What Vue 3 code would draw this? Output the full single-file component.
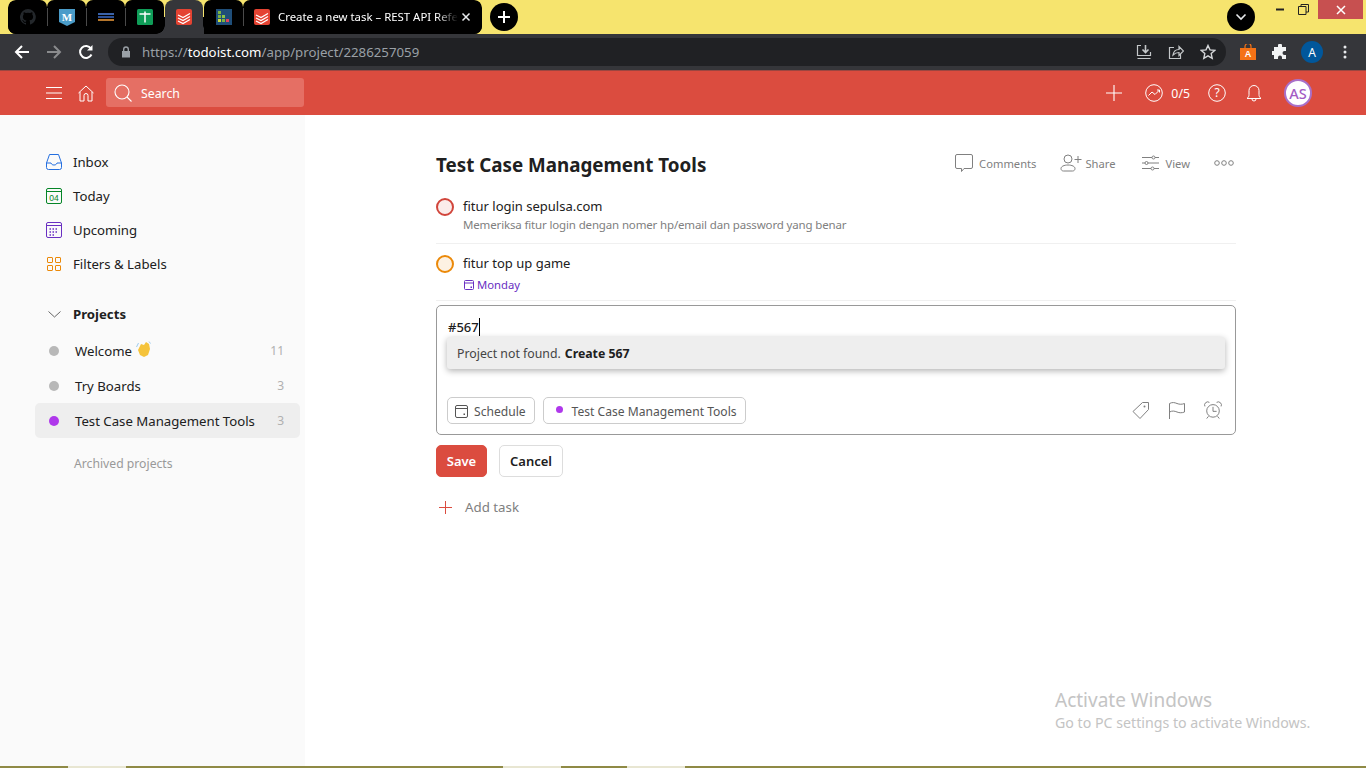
<script setup>
const navItems = [
  { name: 'Inbox', icon: 'inbox' },
  { name: 'Today', icon: 'today' },
  { name: 'Upcoming', icon: 'upcoming' },
  { name: 'Filters & Labels', icon: 'filters' },
]

const projects = [
  { name: 'Welcome', count: 11, color: '#b8b8b8', wave: true },
  { name: 'Try Boards', count: 3, color: '#b8b8b8' },
  { name: 'Test Case Management Tools', count: 3, color: '#af38eb', active: true },
]
</script>

<template>
  <div class="screen">
    <div class="tabstrip">
      <div class="tabs">
        <div class="tab">
          <svg width="16" height="16" viewBox="0 0 16 16"><path fill="#23272b" d="M8 0a8 8 0 0 0-2.5 15.6c.4.1.5-.2.5-.4v-1.4c-2.2.5-2.7-1-2.7-1-.4-.9-.9-1.200-.9-1.200-.7-.5.100-.5.100-.5.800.1 1.200.8 1.200.8.700 1.200 1.900.9 2.300.7.100-.5.300-.9.500-1.100-1.800-.2-3.600-.9-3.600-4 0-.9.300-1.600.8-2.100-.1-.2-.4-1 .1-2.100 0 0 .7-.2 2.200.8a7.600 7.600 0 0 1 4 0c1.500-1 2.200-.8 2.200-.8.500 1.100.2 1.900.1 2.100.5.600.8 1.300.8 2.100 0 3.100-1.900 3.700-3.700 3.900.3.300.6.800.6 1.500v2.200c0 .2.100.5.600.4A8 8 0 0 0 8 0z"/></svg>
        </div>
        <div class="tab sep">
          <svg width="16" height="17" viewBox="0 0 16 17"><path fill="#4a9cc9" d="M0 0h16v13l-8 4-8-4z"/><text x="8" y="11.500" class="fav-m">M</text></svg>
        </div>
        <div class="tab sep">
          <svg width="16" height="10" viewBox="0 0 16 10"><rect y="1" width="16" height="2" fill="#3a62a8"/><rect y="4" width="16" height="2" fill="#2c4f94"/><rect y="7" width="16" height="2" fill="#b5762c"/></svg>
        </div>
        <div class="tab sep">
          <svg width="16" height="16" viewBox="0 0 16 16"><rect width="16" height="16" rx="1.500" fill="#0f9d58"/><path fill="none" stroke="#fff" stroke-width="1.500" d="M2.500 5h11M8 2.500v11"/></svg>
        </div>
        <div class="tab active">
          <svg width="16" height="16" viewBox="0 0 16 16"><use href="#todoist-mark"/></svg>
        </div>
        <div class="tab">
          <svg width="16" height="16" viewBox="0 0 16 16"><rect width="16" height="16" fill="#1f4e79"/><rect x="2" y="2" width="3" height="3" fill="#7cb342"/><rect x="2" y="6" width="3" height="3" fill="#7cb342"/><rect x="6" y="6" width="3" height="3" fill="#8bc34a"/><rect x="2" y="10" width="3" height="3" fill="#cddc39"/><rect x="6" y="10" width="3" height="3" fill="#7cb342"/><rect x="10" y="10" width="3" height="3" fill="#e2445c"/></svg>
        </div>
        <div class="tab sep wide">
          <svg width="16" height="16" viewBox="0 0 16 16">
            <defs>
              <g id="todoist-mark">
                <rect width="16" height="16" rx="2" fill="#e44332"/>
                <path fill="none" stroke="#fff" stroke-width="1.300" d="M2 6l5 2.500 7-4M2 9l5 2.500 7-4M2 12l5 2.500 7-4"/>
              </g>
            </defs>
            <use href="#todoist-mark"/>
          </svg>
          <span class="tab-title">Create a new task – REST API Refe</span>
          <svg class="tab-x" width="10" height="10" viewBox="0 0 10 10"><path stroke="#e8eaed" stroke-width="1.500" d="M1.500 1.500l7 7M8.500 1.500l-7 7"/></svg>
        </div>
      </div>
      <div class="round-btn">
        <svg width="14" height="14" viewBox="0 0 14 14"><path stroke="#fff" stroke-width="2" d="M7 1v12M1 7h12"/></svg>
      </div>
      <div class="strip-right">
        <div class="round-btn">
          <svg width="12" height="8" viewBox="0 0 12 8"><path fill="none" stroke="#e8eaed" stroke-width="1.600" d="M1.500 1.500L6 6l4.500-4.500"/></svg>
        </div>
        <div class="win-btn">
          <svg width="10" height="3" viewBox="0 0 10 3"><rect width="8" height="2" y="0.500" fill="#222"/></svg>
        </div>
        <div class="win-btn">
          <svg width="11" height="11" viewBox="0 0 11 11"><path fill="none" stroke="#222" d="M.5 2.500h7.500v8H.5zM3 2.500V.5h7.500v7.500H8"/></svg>
        </div>
        <div class="win-btn close">
          <svg width="10" height="10" viewBox="0 0 10 10"><path stroke="#fff" stroke-width="1.500" d="M1 1l8 8M9 1L1 9"/></svg>
        </div>
      </div>
    </div>

    <div class="toolbar">
      <svg class="tool first" width="16" height="16" viewBox="0 0 16 16"><path fill="none" stroke="#fff" stroke-width="2" d="M15 8H2M8 2L2 8l6 6"/></svg>
      <svg class="tool" width="16" height="16" viewBox="0 0 16 16"><path fill="none" stroke="#8a8b8d" stroke-width="2" d="M1 8h13M8 2l6 6-6 6"/></svg>
      <svg class="tool" width="16" height="16" viewBox="0 0 16 16"><path fill="none" stroke="#fff" stroke-width="2" d="M13.500 10.500A6 6 0 1 1 13 4.500"/><path fill="#fff" d="M14.500 1v5.500H9z"/></svg>
      <div class="urlbar">
        <svg width="10" height="12" viewBox="0 0 10 12"><path fill="#9aa0a6" d="M1 5h8v6.500H1z"/><path fill="none" stroke="#9aa0a6" stroke-width="1.400" d="M2.700 5V3.300a2.300 2.300 0 0 1 4.600 0V5"/></svg>
        <span class="url">https://<b>todoist.com</b>/app/project/2286257059</span>
        <div class="url-icons">
          <svg width="16" height="16" viewBox="0 0 16 16"><path fill="none" stroke="#c4c7c9" stroke-width="1.200" d="M5 1.500H1.500v10h13V8M1.500 14.500h13"/><path fill="none" stroke="#c4c7c9" stroke-width="1.600" d="M9.500 1v7M6.500 5.500l3 3 3-3"/></svg>
          <svg width="16" height="16" viewBox="0 0 16 16"><path fill="none" stroke="#c4c7c9" stroke-width="1.200" d="M6 3.500H1.500v11h11V10M5 11c.5-3.500 3-5.500 6-5.500V2.500L15.500 7 11 11.500V8.500C8.500 8.500 6.500 9.500 5 11z"/></svg>
          <svg width="16" height="16" viewBox="0 0 16 16"><path fill="none" stroke="#d6d8da" stroke-width="1.400" d="M8 1.500l2 4.400 4.700.5-3.500 3.200 1 4.700L8 11.900l-4.200 2.400 1-4.700L1.300 6.400 6 5.900z"/></svg>
        </div>
      </div>
      <div class="ext-icons">
        <svg width="16" height="16" viewBox="0 0 16 16"><path fill="#f47216" d="M0 4h16v12H0z"/><path fill="none" stroke="#f47216" stroke-width="1.200" d="M5 4V2.500a3 3 0 0 1 6 0V4"/><text x="8" y="13" class="fav-a">A</text></svg>
        <svg class="puzzle" width="16" height="16" viewBox="0 0 16 16"><path fill="#f1f3f4" d="M6 1.500a2 2 0 0 1 4 0V3h4v4h-1.500a2 2 0 0 0 0 4H14v4h-4v-1.500a2 2 0 0 0-4 0V15H2v-4H.5a2 2 0 0 1 0-4H2V3h4z"/></svg>
        <div class="profile">A</div>
        <svg class="kebab" width="4" height="14" viewBox="0 0 4 14"><circle cx="2" cy="2" r="1.500" fill="#e8eaed"/><circle cx="2" cy="7" r="1.500" fill="#e8eaed"/><circle cx="2" cy="12" r="1.500" fill="#e8eaed"/></svg>
      </div>
    </div>

    <header class="topbar">
      <svg class="menu-ic" width="16" height="14" viewBox="0 0 16 14"><path stroke="#fff" d="M0 1.500h16M0 7h16M0 12.500h16"/></svg>
      <svg class="home-ic" width="16" height="17" viewBox="1 1 16 16"><path fill="none" stroke="#fff" d="M1.500 8.500L9 1.500l7.500 7M3 7.500v9h4v-5.500a2 2 0 0 1 4 0v5.500h4v-9"/></svg>
      <div class="search">
        <svg width="20" height="20" viewBox="0 0 20 20"><circle cx="9" cy="9" r="7" fill="none" stroke="#fff" stroke-width="1.100"/><path stroke="#fff" stroke-width="1.100" d="M14 14l4.500 4.500"/></svg>
        <span>Search</span>
      </div>
      <div class="top-right">
        <svg width="18" height="18" viewBox="0 0 18 18"><path stroke="#fff" stroke-width="1.100" d="M9 1v16M1 9h16"/></svg>
        <div class="karma">
          <svg width="18" height="18" viewBox="0 0 18 18"><circle cx="9" cy="9" r="8.300" fill="none" stroke="#fff"/><path fill="none" stroke="#fff" d="M3.500 11.500l3.500-3.500 3 2.500 4.500-4.500M12 6h2.500v2.500"/></svg>
          <span>0/5</span>
        </div>
        <svg width="18" height="18" viewBox="0 0 18 18"><circle cx="9" cy="9" r="8.300" fill="none" stroke="#fff"/><text x="9" y="13" class="help-q">?</text></svg>
        <svg class="bell" width="16" height="18" viewBox="0 0 16 18"><path fill="none" stroke="#fff" d="M1 14.500c1.500-1 2-2.500 2-4V6.500a5 5 0 0 1 10 0v4c0 1.500.5 3 2 4zM6 15a2 2 0 0 0 4 0"/></svg>
        <div class="avatar">AS</div>
      </div>
    </header>

    <div class="body">
      <aside class="sidebar">
        <ul class="nav">
          <li v-for="item in navItems" :key="item.name" class="nav-item">
            <svg v-if="item.icon === 'inbox'" width="18" height="18" viewBox="0 0 18 18"><path fill="none" stroke="#246fe0" stroke-width="1" d="M4.500 1.500h9L16.500 10v4.500a2 2 0 0 1-2 2h-11a2 2 0 0 1-2-2V10zM1.500 10h4.500c.5 1.500 1.500 2 3 2s2.500-.5 3-2h4.500"/></svg>
            <svg v-else-if="item.icon === 'today'" width="18" height="18" viewBox="0 0 18 18"><rect x="1.500" y="1.500" width="15" height="15" rx="1.500" fill="none" stroke="#058527"/><path stroke="#058527" d="M1.500 4.500h15"/><text x="9" y="13.500" class="today-num">04</text></svg>
            <svg v-else-if="item.icon === 'upcoming'" width="18" height="18" viewBox="0 0 18 18"><rect x="1.500" y="1.500" width="15" height="15" rx="1.500" fill="none" stroke="#692fc2"/><path stroke="#692fc2" d="M1.500 4.500h15"/><path stroke="#692fc2" stroke-dasharray="1.500 1.500" stroke-width="1.500" d="M4.500 8h9M4.500 11h9M4.500 14h6"/></svg>
            <svg v-else width="18" height="18" viewBox="0 0 18 18"><g fill="none" stroke="#eb8909"><rect x="2.500" y="2.500" width="5" height="5" rx=".5"/><rect x="10.500" y="2.500" width="5" height="5" rx=".5"/><rect x="2.500" y="10.500" width="5" height="5" rx=".5"/><rect x="10.500" y="10.500" width="5" height="5" rx=".5"/></g></svg>
            <span>{{ item.name }}</span>
          </li>
        </ul>

        <div class="projects-head">
          <svg width="13" height="7" viewBox="0 0 13 7"><path fill="none" stroke="#666" d="M.5.5l6 5.500 6-5.500"/></svg>
          <span>Projects</span>
        </div>

        <ul class="projects">
          <li v-for="p in projects" :key="p.name" class="project" :class="{ current: p.active }">
            <i class="dot" :style="{ background: p.color }"></i>
            <span class="project-name">{{ p.name }}</span>
            <svg v-if="p.wave" class="wave" width="15" height="16" viewBox="0 0 15 16"><path fill="#f5c33b" d="M2 9l3-6 3 1 2-3 3 2 1 5-2 6-4 2-4-2z"/><path fill="none" stroke="#9ccbee" d="M.5 6l2-4M13 .5l1.500 2"/></svg>
            <span class="count">{{ p.count }}</span>
          </li>
        </ul>

        <div class="archived">Archived projects</div>
      </aside>

      <main class="content">
        <div class="title-row">
          <h1>Test Case Management Tools</h1>
          <div class="actions">
            <div class="action comments">
              <svg width="18" height="18" viewBox="0 0 18 18"><path fill="none" stroke="#808080" d="M2 .5h14A1.500 1.500 0 0 1 17.500 2v11a1.500 1.500 0 0 1-1.500 1.500H9l-2.500 3v-3H2A1.500 1.500 0 0 1 .5 13V2A1.500 1.500 0 0 1 2 .5z"/></svg>
              <span>Comments</span>
            </div>
            <div class="action share">
              <svg width="22" height="18" viewBox="0 0 22 18"><g fill="none" stroke="#808080"><circle cx="8" cy="5" r="4"/><path d="M1 14.500c0-2 3-3.500 7-3.500s7 1.500 7 3.500c0 1.500-1 2.500-2.500 2.500h-9C2 17 1 16 1 14.500zM18 2v7M14.500 5.500h7"/></g></svg>
              <span>Share</span>
            </div>
            <div class="action view">
              <svg width="17" height="16" viewBox="0 0 17 16"><g fill="none" stroke="#808080"><path d="M0 2.500h10M13 2.500h4M0 8h3M6 8h11M0 13.500h9M12 13.500h5"/><circle cx="11.500" cy="2.500" r="1.500"/><circle cx="4.500" cy="8" r="1.500"/><circle cx="10.500" cy="13.500" r="1.500"/></g></svg>
              <span>View</span>
            </div>
            <svg class="more" width="20" height="6" viewBox="0 0 20 6"><g fill="none" stroke="#808080"><circle cx="3" cy="3" r="2.300"/><circle cx="10" cy="3" r="2.300"/><circle cx="17" cy="3" r="2.300"/></g></svg>
          </div>
        </div>

        <div class="task first-task">
          <i class="check p1"></i>
          <div>
            <div class="task-name">fitur login sepulsa.com</div>
            <div class="task-desc">Memeriksa fitur login dengan nomer hp/email dan password yang benar</div>
          </div>
        </div>
        <div class="task second-task">
          <i class="check p2"></i>
          <div>
            <div class="task-name">fitur top up game</div>
            <div class="task-date">
              <svg width="12" height="12" viewBox="0 0 12 12"><rect x="1.500" y="1.500" width="9" height="9" rx="1" fill="none" stroke="#692fc2"/><path stroke="#692fc2" d="M1.500 4h9"/><rect x="7.500" y="7.500" width="1.500" height="1.500" fill="#692fc2"/></svg>
              <span>Monday</span>
            </div>
          </div>
        </div>

        <div class="editor">
          <div class="editor-input">#567<i class="caret"></i></div>
          <div class="suggest"><span>Project not found.</span> <b>Create 567</b></div>
          <div class="editor-foot">
            <div class="chip">
              <svg width="13" height="13" viewBox="0 0 13 13"><rect x=".5" y=".5" width="12" height="12" rx="1.500" fill="none" stroke="#555"/><path stroke="#555" d="M.5 3.500h12"/><rect x="8.500" y="8.500" width="1.500" height="1.500" fill="#555"/></svg>
              <span>Schedule</span>
            </div>
            <div class="chip project-chip">
              <i class="chip-dot"></i>
              <span>Test Case Management Tools</span>
            </div>
            <div class="editor-icons">
              <svg width="18" height="18" viewBox="0 0 18 18"><path fill="none" stroke="#808080" d="M10.500 1.500h6v7L8 17.500 1 10.500z" stroke-linejoin="round"/><circle cx="12.500" cy="5.500" r="1" fill="#808080"/></svg>
              <svg width="18" height="18" viewBox="0 0 18 18"><path fill="none" stroke="#808080" d="M1.500 18V2.500c3-1.500 5-1 7.500 0s5 1 7.500 0V11c-2.500 1-5 1-7.500 0s-4.500-1.500-7.500 0"/></svg>
              <svg width="18" height="18" viewBox="0 0 20 20"><g fill="none" stroke="#808080" stroke-width="1.100"><circle cx="10" cy="11" r="7"/><path d="M10 6.500v5h4M5 17l-2 2.500M15 17l2 2.500M1 6a3.500 3.500 0 0 1 5-4.500M19 6a3.500 3.500 0 0 0-5-4.500"/></g></svg>
            </div>
          </div>
        </div>

        <div class="form-btns">
          <button class="save">Save</button>
          <button class="cancel">Cancel</button>
        </div>

        <div class="add-task">
          <svg width="13" height="13" viewBox="0 0 13 13"><rect x="6" width="1" height="13" fill="#db4c3f"/><rect y="6" width="13" height="1" fill="#db4c3f"/></svg>
          <span>Add task</span>
        </div>
      </main>

      <div class="activate">
        <div class="activate-title">Activate Windows</div>
        <div class="activate-sub">Go to PC settings to activate Windows.</div>
      </div>
    </div>

    <div class="taskbar">
      <i class="tb-a"></i><i class="tb-b"></i><i class="tb-c"></i>
    </div>
  </div>
</template>

<style>
html, body {
  margin: 0;
  overflow: hidden;
}
</style>

<style scoped>
* {
  box-sizing: border-box;
}

ul {
  list-style: none;
  margin: 0;
  padding: 0;
}

.screen {
  width: 1366px;
  height: 768px;
  display: flex;
  flex-direction: column;
  font-family: "Noto Sans", "Open Sans", sans-serif;
  color: #202020;
  background: #fff;
  overflow: hidden;
}

.tabstrip {
  height: 34px;
  flex: none;
  display: flex;
  align-items: center;
  padding-left: 8px;
  background: #f6e46e;
}

.tabs {
  height: 34px;
  display: flex;
  background: linear-gradient(#f6e46e 50%, #000 50%);
  border-radius: 8px;
  overflow: hidden;
  margin-right: 8px;
}

.tab {
  width: 39px;
  height: 34px;
  display: flex;
  align-items: center;
  justify-content: center;
  position: relative;
  background: #000;
  border-radius: 7px 7px 0 0;
}

.tab.sep::before {
  content: '';
  position: absolute;
  left: 0;
  top: 8px;
  height: 18px;
  width: 1px;
  background: #4a4a4a;
}

.tab.active {
  background: #35363a;
  border-radius: 8px 8px 0 0;
  margin-left: 1px;
  margin-right: 1px;
  width: 38px;
}

/* flared bottom corners of the active tab */
.tab.active::before,
.tab.active::after {
  content: '';
  position: absolute;
  bottom: 0;
  width: 9px;
  height: 9px;
}

.tab.active::before {
  left: -9px;
  background: radial-gradient(circle at 0 0, #000 8.500px, #35363a 9px);
}

.tab.active::after {
  right: -9px;
  background: radial-gradient(circle at 100% 0, #000 8.500px, #35363a 9px);
}

.tab.wide {
  width: 239px;
  justify-content: flex-start;
  padding-left: 11px;
}

.tab-title {
  flex: none;
  width: 180px;
  margin-left: 8px;
  margin-top: -2px;
  font-size: 11.400px;
  color: #fff;
  white-space: nowrap;
  -webkit-mask-image: linear-gradient(90deg, #000 88%, transparent 100%);
  mask-image: linear-gradient(90deg, #000 88%, transparent 100%);
}

.tab-x {
  position: absolute;
  right: 11px;
  top: 12px;
}

.fav-m {
  font: bold 11px "Liberation Serif", serif;
  fill: #fff;
  text-anchor: middle;
}

.fav-a {
  font: bold 9px "Liberation Sans", sans-serif;
  fill: #fff;
  text-anchor: middle;
}

.round-btn {
  width: 28px;
  height: 28px;
  border-radius: 50%;
  background: #000;
  display: flex;
  align-items: center;
  justify-content: center;
}

.strip-right {
  margin-left: auto;
  height: 34px;
  display: flex;
  align-items: flex-start;
}

.strip-right .round-btn {
  margin-top: 3px;
}

.win-btn {
  height: 19px;
  display: flex;
  align-items: center;
  justify-content: center;
}

.win-btn:nth-child(2) {
  width: 34px;
  padding-left: 18px;
}

.win-btn:nth-child(3) {
  width: 29px;
}

.win-btn.close {
  width: 45px;
  background: #c75050;
  margin-right: 3px;
}

.toolbar {
  height: 36px;
  flex: none;
  display: flex;
  align-items: center;
  background: #35363a;
}

.tool {
  margin-left: 16px;
}

.tool.first {
  margin-left: 14px;
}

.urlbar {
  width: 1118px;
  height: 28px;
  margin-left: 14px;
  padding: 0 10px 0 13px;
  display: flex;
  align-items: center;
  border-radius: 14px;
  background: #202124;
}

.url {
  margin-left: 11px;
  font-size: 13.250px;
  color: #9aa0a6;
  white-space: nowrap;
}

.url b {
  font-weight: 400;
  color: #fff;
}

.url-icons {
  margin-left: auto;
  display: flex;
  align-items: center;
  gap: 16px;
}

.ext-icons {
  display: flex;
  align-items: center;
  padding-left: 14px;
}

.puzzle {
  margin-left: 16px;
}

.kebab {
  margin-left: 20px;
}

.profile {
  width: 22px;
  height: 22px;
  margin-left: 13px;
  border-radius: 50%;
  background: #01579b;
  color: #fff;
  font-size: 12px;
  display: flex;
  align-items: center;
  justify-content: center;
}

.topbar {
  height: 45px;
  flex: none;
  display: flex;
  align-items: center;
  background: #db4c3f;
  border-top: 1px solid #9c4640;
  padding-left: 46px;
  padding-right: 54px;
}

.home-ic {
  margin-left: 16px;
}

.search {
  width: 198px;
  height: 29px;
  margin-left: 12px;
  margin-top: -1px;
  padding-left: 7px;
  display: flex;
  align-items: center;
  gap: 8px;
  border-radius: 3px;
  background: #e56f64;
  color: #fff;
  font-size: 12.300px;
}

.search span {
  padding-top: 2px;
}

.top-right {
  margin-left: auto;
  display: flex;
  align-items: center;
  gap: 20px;
}

.karma {
  display: flex;
  align-items: center;
  gap: 8px;
  color: #fff;
  font-size: 12.300px;
  margin-left: 2px;
  margin-right: -2px;
}

.help-q {
  font-size: 12px;
  fill: #fff;
  text-anchor: middle;
}

.avatar {
  width: 28px;
  height: 28px;
  margin-left: 2px;
  border-radius: 50%;
  border: 2px solid #a970c9;
  background: #fff;
  color: #a45cc4;
  font-size: 14.500px;
  font-weight: 500;
  display: flex;
  align-items: center;
  justify-content: center;
}

.body {
  flex: 1;
  display: flex;
  position: relative;
  min-height: 0;
}

.sidebar {
  width: 305px;
  flex: none;
  padding: 30px 5px 0 35px;
  background: #fafafa;
  font-size: 13.200px;
}

.nav-item {
  height: 34px;
  padding-left: 10px;
  display: flex;
  align-items: center;
  gap: 10px;
}

.projects-head {
  height: 34px;
  margin-top: 16px;
  padding-left: 13px;
  display: flex;
  align-items: center;
  gap: 12px;
  font-weight: 700;
}

.projects {
  margin-top: 2px;
}

.project {
  height: 35px;
  padding: 0 16px 0 14px;
  display: flex;
  align-items: center;
  border-radius: 5px;
}

.project.current {
  background: #eee;
}

.dot {
  width: 10px;
  height: 10px;
  border-radius: 50%;
  margin-right: 16px;
  flex: none;
}

.wave {
  margin-left: 4px;
  margin-top: -4px;
}

.count {
  margin-left: auto;
  font-size: 12px;
  color: #b0b0b0;
}

.today-num {
  font: 8.500px "Liberation Sans", sans-serif;
  fill: #058527;
  text-anchor: middle;
}

.archived {
  margin-top: 17px;
  padding-left: 39px;
  font-size: 12.200px;
  color: #999;
}

.content {
  width: 800px;
  margin-left: 131px;
  flex: none;
}

.title-row {
  height: 62px;
  padding-top: 35px;
  display: flex;
  align-items: flex-start;
  justify-content: space-between;
}

h1 {
  margin: 0;
  font-size: 18.800px;
  line-height: 30px;
  font-weight: 700;
  color: #202020;
}

.actions {
  display: flex;
  align-items: center;
  height: 26px;
  font-size: 11.200px;
  color: #808080;
  padding-right: 2px;
}

.action {
  display: flex;
  align-items: center;
}

.comments {
  gap: 6px;
  margin-right: 24px;
}

.share {
  gap: 3px;
  margin-right: 26px;
}

.view {
  gap: 7px;
  margin-right: 24px;
}

.task {
  display: flex;
  gap: 9px;
  border-bottom: 1px solid #f0f0f0;
}

.first-task {
  height: 67px;
  padding-top: 19px;
}

.second-task {
  height: 57px;
  padding-top: 9px;
}

.check {
  width: 18px;
  height: 18px;
  border-radius: 50%;
  flex: none;
  border: 2px solid;
  margin-top: 2px;
}

.check.p1 {
  border-color: #d1453b;
  background: #fbecea;
}

.check.p2 {
  border-color: #eb8909;
  background: #fdf1e2;
}

.task-name {
  font-size: 13px;
  line-height: 21px;
  color: #202020;
}

.task-desc {
  font-size: 11.500px;
  letter-spacing: -0.15px;
  line-height: 16px;
  margin-top: 0;
  color: #808080;
}

.task-date {
  display: flex;
  align-items: center;
  gap: 2px;
  margin-top: 2px;
  font-size: 11.300px;
  line-height: 18px;
  color: #692fc2;
}

.editor {
  position: relative;
  height: 130px;
  margin-top: 4px;
  padding: 0 10px 10px;
  display: flex;
  flex-direction: column;
  border: 1px solid #999;
  border-radius: 5px;
}

.editor-input {
  height: 31px;
  display: flex;
  align-items: center;
  font-size: 13px;
  font-weight: 500;
  color: #202020;
  flex: none;
  padding-top: 10px;
  padding-left: 1px;
}

.caret {
  width: 1px;
  height: 18px;
  background: #000;
}

.suggest {
  position: absolute;
  left: 10px;
  right: 10px;
  top: 31px;
  height: 32px;
  padding-left: 10px;
  display: flex;
  align-items: center;
  gap: 4px;
  border-radius: 3px;
  font-size: 12.300px;
  color: #444;
  background: #eee;
  box-shadow: 0 2px 6px rgba(0, 0, 0, 0.3);
}

.suggest b {
  color: #202020;
}

.editor-foot {
  margin-top: auto;
  display: flex;
  align-items: center;
  gap: 8px;
}

.chip {
  height: 27px;
  padding: 1px 8px 0 7px;
  display: flex;
  align-items: center;
  gap: 6px;
  font-size: 12.100px;
  color: #555;
  border: 1px solid #ccc;
  border-radius: 5px;
}

.project-chip {
  gap: 9px;
  padding-left: 12px;
}

.chip-dot {
  width: 7px;
  height: 7px;
  border-radius: 50%;
  background: #af38eb;
  margin-top: -3px;
}

.editor-icons {
  margin-left: auto;
  margin-top: -2px;
  margin-right: 3px;
  display: flex;
  align-items: center;
  gap: 18px;
}

.form-btns {
  display: flex;
  gap: 12px;
  margin-top: 10px;
}

button {
  height: 32px;
  border-radius: 5px;
  font-family: inherit;
  font-size: 13px;
  font-weight: 600;
  padding: 0;
}

.save {
  width: 51px;
  color: #fff;
  background: #db4c3f;
  border: 1px solid #db4c3f;
}

.cancel {
  width: 64px;
  color: #202020;
  background: #fff;
  border: 1px solid #ddd;
}

.add-task {
  margin-top: 20px;
  padding-left: 3px;
  height: 20px;
  display: flex;
  align-items: center;
  gap: 13px;
  font-size: 13.300px;
  color: #808080;
}

.activate {
  position: absolute;
  left: 1055px;
  top: 572px;
  color: #c4c4c4;
  pointer-events: none;
}

.activate-title {
  font-size: 19px;
  line-height: 26px;
}

.activate-sub {
  font-size: 14.200px;
  line-height: 20px;
}

.taskbar {
  height: 2px;
  flex: none;
  display: flex;
  background: #8f8a45;
}

.taskbar i {
  height: 2px;
  display: block;
  background: #e8e6d2;
  width: 58px;
}

.tb-a {
  margin-left: 68px;
}

.tb-b {
  margin-left: 377px;
  background: #fff;
}

.tb-c {
  margin-left: 66px;
}
</style>
